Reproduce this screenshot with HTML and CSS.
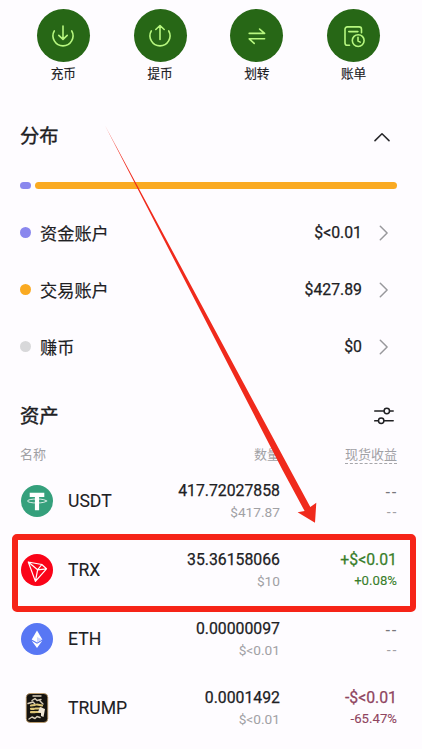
FILE: index.html
```html
<!DOCTYPE html>
<html lang="zh-CN">
<head>
<meta charset="utf-8">
<meta name="viewport" content="width=device-width, initial-scale=1">
<title>资产</title>
<link rel="stylesheet" href="styles.css">
</head>
<body>
<main class="screen">
  <nav class="actions">
    <a class="action"><span class="action-icon"><svg viewBox="0 0 26 26"><path d="M4.300 7.900A10 10 0 1 0 21.700 7.900M13 3v12.800M8.800 12.300l4.200 4 4.200-4"/></svg></span><span class="action-label">充币</span></a>
    <a class="action"><span class="action-icon"><svg viewBox="0 0 26 26"><path d="M4.300 7.900A10 10 0 1 0 21.700 7.900M13 16.400V3M8.800 6.500l4.200-4 4.200 4"/></svg></span><span class="action-label">提币</span></a>
    <a class="action"><span class="action-icon"><svg viewBox="0 0 26 26"><path d="M5.200 10.400h15.400l-5-4.300M20.600 15.800H5.200l5 4.600"/></svg></span><span class="action-label">划转</span></a>
    <a class="action"><span class="action-icon"><svg viewBox="0 0 26 26"><path d="M8.500 22.300H6.300a2.300 2.300 0 0 1-2.300-2.300V6.200a2.300 2.300 0 0 1 2.300-2.300h11.900a2.300 2.300 0 0 1 2.300 2.300v3.500M7.800 8.600h9.100"/><circle cx="17.200" cy="17.600" r="5.900"/><path d="M17 14.300v3.700l2.200 1.100"/></svg></span><span class="action-label">账单</span></a>
  </nav>

  <section class="distribution">
    <header class="section-head">
      <h2>分布</h2>
      <svg class="collapse" viewBox="0 0 16 10"><path d="M1 8.600 8 1.800l7 6.800"/></svg>
    </header>
    <div class="split-bar"><i class="part funding"></i><i class="part trading"></i></div>
    <div class="account"><i class="dot funding"></i><span class="account-name">资金账户</span><span class="account-value">$&lt;0.01</span><svg class="chevron" viewBox="0 0 10 16"><path d="m1.300 1.300 6.800 6.700-6.800 6.700"/></svg></div>
    <div class="account"><i class="dot trading"></i><span class="account-name">交易账户</span><span class="account-value">$427.89</span><svg class="chevron" viewBox="0 0 10 16"><path d="m1.300 1.300 6.800 6.700-6.800 6.700"/></svg></div>
    <div class="account"><i class="dot earn"></i><span class="account-name">赚币</span><span class="account-value">$0</span><svg class="chevron" viewBox="0 0 10 16"><path d="m1.300 1.300 6.800 6.700-6.800 6.700"/></svg></div>
  </section>

  <section class="assets">
    <header class="section-head">
      <h2>资产</h2>
      <svg class="filter" viewBox="0 0 20 18"><path d="M.7 4h9M16 4h3.200M.7 13.800h3.200M10.500 13.800h8.700"/><circle cx="12.800" cy="4" r="2.700"/><circle cx="7.200" cy="13.800" r="2.700"/></svg>
    </header>
    <div class="columns"><span>名称</span><span>数量</span><span class="hinted">现货收益</span></div>

    <div class="asset">
      <svg class="coin" viewBox="0 0 32 32"><circle cx="16" cy="16" r="16" fill="#35a07c"/><path fill="#fff" d="M8.700 7.800h14.600v4.100h-5.200v13.300h-4.200V11.900H8.700z"/><ellipse cx="16" cy="16" rx="9.600" ry="2" fill="none" stroke="#fff" stroke-width=".8"/></svg>
      <span class="symbol">USDT</span>
      <span class="pair"><b>417.72027858</b><small>$417.87</small></span>
      <span class="pair none"><b>--</b><small>--</small></span>
    </div>
    <div class="asset">
      <svg class="coin" viewBox="0 0 32 32"><circle cx="16" cy="16" r="16" fill="#fa0318"/><path fill="none" stroke="#fff" stroke-width="1.200" stroke-linejoin="round" d="M7.300 8 20.800 10.500 25.500 14.800 14.400 27.400zM7.300 8l9.300 7.800 8.900-1M20.800 10.500l-4.200 5.300-2.200 11.600"/></svg>
      <span class="symbol">TRX</span>
      <span class="pair"><b>35.36158066</b><small>$10</small></span>
      <span class="pair gain"><b>+$&lt;0.01</b><small>+0.08%</small></span>
    </div>
    <div class="asset">
      <svg class="coin" viewBox="0 0 32 32"><circle cx="16" cy="16" r="16" fill="#5877f4"/><path fill="#fff" d="m16 7.600 5.300 8.900-5.300 3-5.300-3z"/><path fill="#fff" d="m10.700 17.800 5.300 3 5.300-3-5.300 7.300z"/><path fill="#cbd5ff" d="m16 14 5.300 2.500-5.300 3z"/></svg>
      <span class="symbol">ETH</span>
      <span class="pair"><b>0.00000097</b><small>$&lt;0.01</small></span>
      <span class="pair none"><b>--</b><small>--</small></span>
    </div>
    <div class="asset">
      <svg class="coin" viewBox="0 0 32 32"><rect x="5.200" y="1.500" width="21.600" height="29" rx="4" fill="#15130f" stroke="#c6a169" stroke-width=".8"/><path fill="none" stroke="#d8cdb8" stroke-width="1.400" d="M12 4h8M11 8.500l3-2 2 2 4-1M7 11.500l5-1.500 2 2M19 9l3 3M8 27l3-2 3 1.500 2-2 3 1"/><path fill="none" stroke="#dcc476" stroke-width="2.200" d="M10 13.500l4-.5M16 12.500l5 1M10 16.800h3M14.500 16.500h6M10 20.200h4M15 20h4"/><path fill="#eee5d5" d="m19 15 5 2-1.500 8-2.500-1v-3l-3-1z"/></svg>
      <span class="symbol">TRUMP</span>
      <span class="pair"><b>0.0001492</b><small>$&lt;0.01</small></span>
      <span class="pair loss"><b>-$&lt;0.01</b><small>-65.47%</small></span>
    </div>
  </section>

  <div class="highlight"></div>
  <svg class="arrow" viewBox="0 0 422 749"><path d="M105 125.500 290.300 470 310.300 507 316.300 502.700 315 522.800 297.600 512.300 304.600 511 282.500 470z"/></svg>
</main>
</body>
</html>
```
FILE: styles.css
```css
* { box-sizing: border-box; }
body {
  margin: 0;
  background: #fefcff;
  color: #202023;
  font-family: Roboto, "Noto Sans CJK SC", sans-serif;
}
.screen {
  position: relative;
  width: 422px;
  height: 749px;
  overflow: hidden;
}
svg { display: block; fill: none; stroke-linecap: round; stroke-linejoin: round; }

.actions {
  display: grid;
  grid-template-columns: repeat(4, 1fr);
  padding: 9px 20px 0 15px;
  height: 113px;
}
.action { display: flex; flex-direction: column; align-items: center; }
.action-icon {
  display: grid;
  place-items: center;
  width: 53px;
  height: 53px;
  border-radius: 50%;
  background: #276716;
}
.action-icon svg { width: 26px; height: 26px; stroke: #b7f77f; stroke-width: 1.6; }
.action-label { margin-top: 2px; font-size: 12.7px; line-height: 19px; -webkit-text-stroke: .15px; }

.section-head {
  display: flex;
  justify-content: space-between;
  align-items: center;
  height: 48px;
}
h2 { margin: 0; font-size: 19.3px; line-height: 28px; font-weight: 400; -webkit-text-stroke: .4px; }
.distribution, .assets { padding: 0 25px 0 20px; }
.collapse { width: 16px; height: 10px; margin-right: 7px; stroke: #29292c; stroke-width: 1.6; }
.split-bar { display: flex; gap: 4px; height: 7px; margin: 21px 0 15px; }
.part { border-radius: 4px; }
.part.funding { width: 11px; }
.part.trading { flex: 1; }
.funding { background: #8a87ee; }
.trading { background: #faaa22; }
.earn { background: #d8d8da; }
.account { display: flex; align-items: center; height: 57px; }
.dot { width: 11px; height: 11px; margin-right: 9px; border-radius: 50%; }
.account-name { flex: 1; margin-top: -1px; font-size: 17.2px; -webkit-text-stroke: .18px; }
.account-value { font-size: 15.8px; -webkit-text-stroke: .25px; }
.chevron { width: 10px; height: 16px; margin: 0 8px 0 17px; stroke: #98989c; stroke-width: 1.5; }

.assets { padding-top: 17px; }
.filter { width: 20px; height: 18px; margin-right: 3px; stroke: #202023; stroke-width: 1.5; }
.assets h2 { margin-top: 1px; }
.columns {
  display: grid;
  grid-template-columns: 1fr 140px 117px;
  height: 27px;
  color: #a1a1a5;
  font-size: 13px;
  line-height: 19px;
  padding-top: 5px;
}
.columns span { justify-self: end; height: 19px; }
.columns span:first-child { justify-self: start; }
.columns .hinted { border-bottom: 1px dashed #a6a6aa; }
.asset {
  display: grid;
  grid-template-columns: 48px 1fr 140px 117px;
  align-items: center;
  height: 68.9px;
}
.coin { width: 32px; height: 32px; margin-left: 1px; }
.symbol { font-size: 17.6px; -webkit-text-stroke: .1px; }
.pair { display: flex; flex-direction: column; align-items: flex-end; }
.pair b { font-size: 15.8px; line-height: 22px; font-weight: 400; -webkit-text-stroke: .25px; }
.pair small { color: #a1a1a5; font-size: 13.7px; line-height: 20px; }
.none b, .none small { font-family: "Noto Sans", sans-serif; letter-spacing: 1.3px; margin-right: -1px; }
.none b { color: #77777b; -webkit-text-stroke: 0; }
.gain b, .gain small { color: #397e2b; }
.loss b, .loss small { color: #8f4460; }
.gain small, .loss small { font-size: 13.2px; -webkit-text-stroke: .1px; }

.highlight {
  position: absolute;
  left: 12px;
  top: 534px;
  width: 404px;
  height: 78px;
  border: 6px solid #f62418;
  border-radius: 5px;
}
.arrow { position: absolute; inset: 0; width: 422px; height: 749px; fill: #f02a1c; }
```
